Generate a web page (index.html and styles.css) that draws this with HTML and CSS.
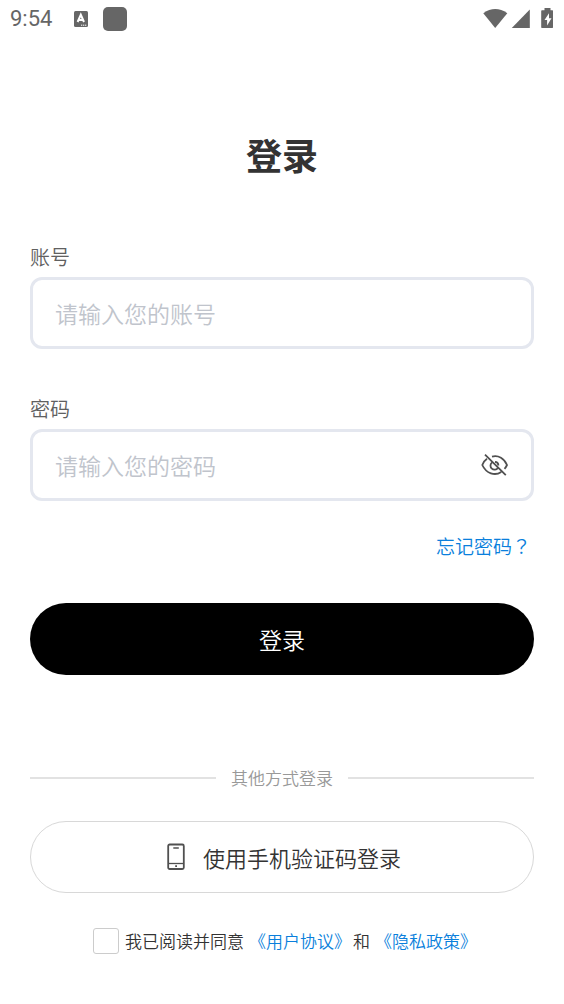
FILE: index.html
```html
<!DOCTYPE html>
<html lang="zh-CN">
<head>
<meta charset="utf-8">
<meta name="viewport" content="width=device-width, initial-scale=1">
<title>登录</title>
<link rel="stylesheet" href="styles.css">
</head>
<body>
<header class="status">
  <div class="status-side">
    <span class="clock">9:54</span>
    <svg class="keyboard" width="14" height="16" viewBox="0 0 14 16" aria-hidden="true"><rect width="14" height="16" rx="1.5" fill="#666"/><path d="M3.6 11 6.800 3.800l3.200 7.200M4.800 9h4" fill="none" stroke="#fff" stroke-width="2"/><path d="M7 14.200h1.300m.7 0h1.300m.7 0h1.300" stroke="#fff" stroke-width="1"/></svg>
    <span class="app-dot"></span>
  </div>
  <div class="status-side">
    <svg width="72" height="22" viewBox="0 0 72 22" aria-hidden="true" fill="#666"><path d="M1.3 5.2Q13.2-3 25.3 5.2L13.2 20Z"/><path d="M47.8 1.5v18.500H29.800z"/><path d="M62.500 0h6v2.200h2c.4 0 .5.4.5 1v15.800c0 .7-.2 1-.8 1h-10c-.7 0-1-.3-1-1V3.200c0-.6.4-1 1-1h2.300z"/><path d="M67 5.200 62.500 12h2.600v5.500L69.500 10.200h-2.500z" fill="#fff"/></svg>
  </div>
</header>
<main class="page">
  <h1 class="title">登录</h1>
  <form class="form">
    <label class="label" for="account">账号</label>
    <div class="field"><input class="input" id="account" type="text" placeholder="请输入您的账号"></div>
    <label class="label" for="password">密码</label>
    <div class="field">
      <input class="input" id="password" type="password" placeholder="请输入您的密码">
      <button class="eye" type="button" aria-label="显示密码">
        <svg width="28" height="24" viewBox="0 0 28 24" fill="none" stroke="#505050" stroke-width="1.800"><path d="M11 3.600C17.500 1.900 23.400 5.500 26 12C25.300 13.500 24.500 14.700 23.500 15.800M6 5.800C3.800 7.300 2.300 9.400 1.300 12C5.200 20.600 14 23.200 20.200 19M10.800 9.700a4 4 0 1 0 6 5.200M14 8.900a3.600 3.600 0 0 1 3.400 3.500M4 1.600 24.800 22.200"/></svg>
      </button>
    </div>
    <a class="forgot" href="#">忘记密码<span class="mark" lang="ja">？</span></a>
    <button class="pill primary" type="submit">登录</button>
  </form>
  <div class="divider"><span>其他方式登录</span></div>
  <button class="pill secondary" type="button">
    <svg width="18" height="28" viewBox="0 0 18 28" fill="none" stroke="#505050" stroke-width="1.800" aria-hidden="true"><rect x="1.200" y="1.500" width="15.600" height="24.500" rx="1.500"/><path d="M1.500 20.500h15" stroke-width="1.300"/><path d="M6.300 5h5.500" stroke-width="1.500"/><path d="M8.200 23.200h1.800"/></svg>
    <span>使用手机验证码登录</span>
  </button>
  <div class="agreement">
    <input class="check" id="agree" type="checkbox">
    <p class="terms"><label for="agree">我已阅读并同意</label><a href="#">《用户协议》</a>和<a href="#">《隐私政策》</a></p>
  </div>
</main>
</body>
</html>
```
FILE: styles.css
```css
* {
  box-sizing: border-box;
}

body {
  margin: 0;
  background: #fff;
  color: #333;
  font-family: "Noto Sans CJK SC", sans-serif;
  font-weight: 350;
}

a {
  color: #0a7fdc;
  text-decoration: none;
}

button,
input {
  font-family: inherit;
  font-weight: inherit;
}

.status {
  display: flex;
  justify-content: space-between;
  height: 38px;
  padding: 0 10px;
}

.status-side {
  display: flex;
  align-items: center;
}

.clock {
  color: #666;
  font: 400 22px/38px Roboto, sans-serif;
}

.keyboard {
  margin: 0 15px 0 22px;
}

.app-dot {
  width: 24px;
  height: 24px;
  border-radius: 5px;
  background: #666;
}

.page {
  padding: 90px 30px 40px;
}

.title {
  margin: 0 0 64px;
  font-size: 36px;
  line-height: 52px;
  text-align: center;
}

.form {
  display: flex;
  flex-direction: column;
}

.label {
  margin-bottom: 8px;
  color: #606060;
  font-size: 20px;
  line-height: 25px;
}

.field {
  display: flex;
  align-items: center;
  height: 72px;
  margin-bottom: 47px;
  padding: 0 22px;
  border: 3px solid #e4e7ef;
  border-radius: 12px;
}

.input {
  flex: 1;
  min-width: 0;
  padding: 0;
  border: 0;
  outline: 0;
  background: transparent;
  color: #333;
  font-size: 23px;
  line-height: 36px;
}

.input::placeholder {
  color: #c0c4cc;
}

.eye {
  display: flex;
  padding: 0;
  border: 0;
  background: none;
}

.forgot {
  align-self: flex-end;
  margin: -15px 3px 44px 0;
  font-size: 19px;
  line-height: 26px;
}

.mark {
  font-family: "Noto Sans CJK JP", sans-serif;
}

.pill {
  display: flex;
  align-items: center;
  justify-content: center;
  width: 100%;
  height: 72px;
  padding: 0;
  border-radius: 36px;
}

.primary {
  border: 0;
  background: #000;
  color: #fff;
  font-size: 23px;
}

.divider {
  display: flex;
  align-items: center;
  gap: 15px;
  margin: 91px 0 31px;
  color: #999;
  font-size: 17px;
  line-height: 24px;
}

.divider::before,
.divider::after {
  content: "";
  flex: 1;
  height: 2px;
  background: #e2e2e2;
}

.secondary {
  gap: 18px;
  padding-left: 4px;
  border: 1px solid #d8d8d8;
  background: #fff;
  color: #333;
  font-size: 22px;
}

.agreement {
  display: flex;
  align-items: center;
  justify-content: center;
  gap: 6px;
  margin-top: 35px;
  padding-left: 8px;
}

.check {
  appearance: none;
  width: 26px;
  height: 26px;
  margin: 0;
  border: 1px solid #ccc;
  border-radius: 3px;
}

.check:checked {
  background: #0a7fdc;
}

.terms {
  margin: 0;
  font-size: 17px;
  line-height: 26px;
}

.terms a {
  margin: 0 2px 0 5px;
}
```
